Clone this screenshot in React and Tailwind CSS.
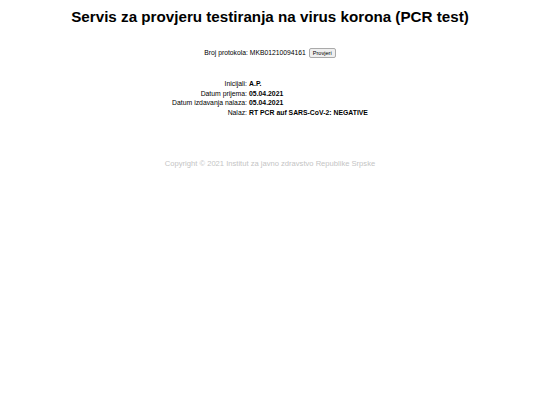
export default function App() {
  const rows = [
    ['Inicijali:', 'A.P.'],
    ['Datum prijema:', '05.04.2021'],
    ['Datum izdavanja nalaza:', '05.04.2021'],
    ['Nalaz:', 'RT PCR auf SARS-CoV-2: NEGATIVE'],
  ];

  return (
    <div className="min-h-[405px] bg-white text-black font-['Liberation_Sans',Arial,sans-serif]">
      <h1 className="pt-[6px] text-center text-[15.2px] font-bold leading-[22px]">
        Servis za provjeru testiranja na virus korona (PCR test)
      </h1>

      <div className="mt-[20px] flex items-center justify-center text-[6.75px] leading-[10px]">
        <span>Broj protokola:</span>
        <span className="ml-[2px]">MKB01210094161</span>
        <button className="ml-[3px] h-[10px] rounded-[2px] border border-[#aaa] bg-[#efefef] px-[3px] text-[5.6px] leading-[8px]">
          Provjeri
        </button>
      </div>

      <div className="mt-[21px] flex justify-center text-[6.85px] leading-[9.5px]">
        <table>
          <tbody>
            {rows.map(([label, value]) => (
              <tr key={label}>
                <td className="pr-[2px] text-right">{label}</td>
                <td className="font-bold">{value}</td>
              </tr>
            ))}
          </tbody>
        </table>
      </div>

      <div className="mt-[42px] text-center text-[7.6px] leading-[10px] text-[#c4c4c4]">
        Copyright © 2021 Institut za javno zdravstvo Republike Srpske
      </div>
    </div>
  );
}
